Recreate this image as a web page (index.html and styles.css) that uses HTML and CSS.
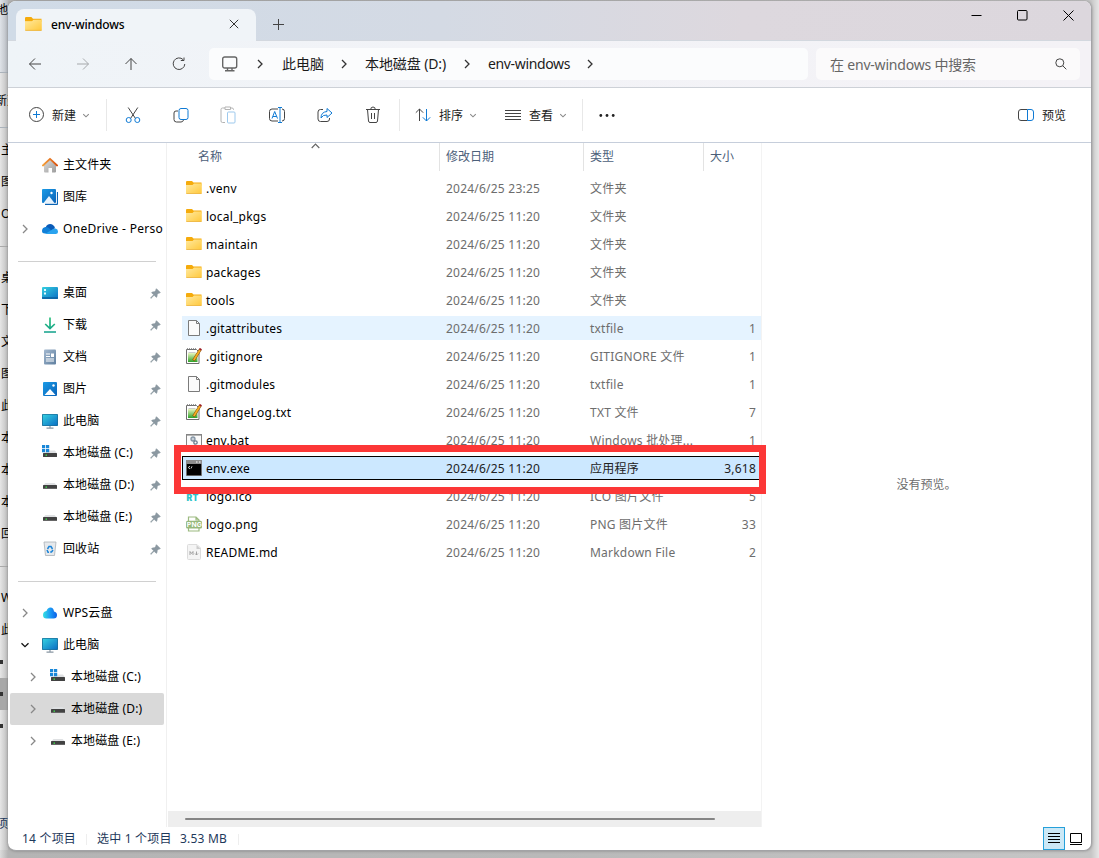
FILE: index.html
```
<!DOCTYPE html>
<html lang="zh-CN">
<head>
    <meta charset="UTF-8">
    <meta name="viewport" content="width=device-width, initial-scale=1.0">
    <title>env-windows</title>
    <link rel="stylesheet" href="styles.css">
</head>
<body>
    <!-- Icon definitions -->
    <svg class="defs" width="0" height="0">
        <defs>
            <linearGradient id="gFolder" x1="0" y1="0" x2="1" y2="1"><stop offset="0" stop-color="#ffe9a0"/><stop offset="1" stop-color="#ffc83a"/></linearGradient>
            <linearGradient id="gScreen" x1="0" y1="0" x2="1" y2="1"><stop offset="0" stop-color="#35d0e0"/><stop offset="1" stop-color="#0b6fc4"/></linearGradient>
            <linearGradient id="gBlue" x1="0" y1="0" x2="1" y2="1"><stop offset="0" stop-color="#1a9be6"/><stop offset="1" stop-color="#0a62b8"/></linearGradient>
            <linearGradient id="gDown" x1="0" y1="0" x2="0" y2="16" gradientUnits="userSpaceOnUse"><stop offset="0" stop-color="#2fc27e"/><stop offset="1" stop-color="#0f9f8c"/></linearGradient>
            <linearGradient id="gDoc" x1="0" y1="0" x2="1" y2="1"><stop offset="0" stop-color="#a3b8cf"/><stop offset="1" stop-color="#5f7f9f"/></linearGradient>
            <linearGradient id="gHouse" x1="0" y1="0" x2="1" y2="1"><stop offset="0" stop-color="#dedede"/><stop offset="1" stop-color="#9c9c9c"/></linearGradient>
            <linearGradient id="gRoof" x1="0" y1="0" x2="1" y2="0"><stop offset="0" stop-color="#f5a13c"/><stop offset="1" stop-color="#d9520f"/></linearGradient>
            <linearGradient id="gWps" x1="0" y1="0" x2="1" y2="0"><stop offset="0" stop-color="#35e0e0"/><stop offset=".5" stop-color="#1c9cf5"/><stop offset="1" stop-color="#0b5fe8"/></linearGradient>
            <linearGradient id="gNote" x1="0" y1="0" x2="0" y2="1"><stop offset="0" stop-color="#e9f7c0"/><stop offset="1" stop-color="#2fa12a"/></linearGradient>
        </defs>
        <symbol id="folder" viewBox="0 0 16 16">
            <path d="M0 2Q0 1 1 1h5l1.500 1.500H15.500v3H0z" fill="#f5ab0c"/>
            <path d="M0 5h6.500L8 3.500h7.800V13q0 .8-.8.8H.8Q0 13.800 0 13z" fill="url(#gFolder)"/>
            <path d="M.3 13.500h15.300" stroke="#e9ae34" stroke-width=".7"/>
        </symbol>
        <symbol id="home" viewBox="0 0 16 16">
            <path d="M2 8 8 2.500 14 8v6.500q0 1-1 1h-3V11H6.500v4.500H3q-1 0-1-1z" fill="url(#gHouse)"/>
            <path d="M.9 8.500 8 1.800l7.100 6.700" fill="none" stroke="url(#gRoof)" stroke-width="1.800" stroke-linejoin="round" stroke-linecap="round"/>
        </symbol>
        <symbol id="gallery" viewBox="0 0 16 16">
            <path d="M3 15.300h12q.5 0 .5-.5V3" fill="none" stroke="#0c64b4" stroke-width="1.200"/>
            <rect width="14" height="14" rx="1" fill="url(#gBlue)"/>
            <path d="M1.500 14 7 7l5.500 7z" fill="#e8f3fc"/>
            <circle cx="9.500" cy="4" r="1.200" fill="#fff"/>
        </symbol>
        <symbol id="onedrive" viewBox="0 0 16 16">
            <path d="M3 9.500Q3.500 3 8 3q3.500 0 5 4l-4 4z" fill="#0a5bb8"/>
            <path d="M0 10q0-3.500 3.500-4Q6 5.800 8 8l3 4.500H3Q0 12.500 0 10z" fill="#1180d8"/>
            <path d="M3 12.900 9.500 9q1.500-2 4-1.500Q16 8 16 10.500q0 2.500-2.500 2.500z" fill="#2aa3ef"/>
        </symbol>
        <symbol id="desktop" viewBox="0 0 16 16">
            <rect y="2" width="16" height="12" rx="1" fill="url(#gScreen)"/>
            <path d="M2 4h2v2H2zM2 7.500h2v2H2z" fill="#e4fbff"/>
            <path d="M0 13h16" stroke="#0b5f9e" stroke-width="1.500"/>
        </symbol>
        <symbol id="download" viewBox="0 0 16 16">
            <path d="M8 .5v11M3.200 7 8 11.500 12.800 7M2 15h12" fill="none" stroke="url(#gDown)" stroke-width="1.700"/>
        </symbol>
        <symbol id="docs" viewBox="0 0 16 16">
            <rect x="2" y=".5" width="12" height="15" rx="1" fill="url(#gDoc)"/>
            <path d="M4 5h4M4 7.500h4M4 10h8M4 12h8" fill="none" stroke="#fff"/>
            <path d="M9 4.500h3V8H9z" fill="#fff"/>
        </symbol>
        <symbol id="pics" viewBox="0 0 16 16">
            <rect x="1" y="1" width="14" height="14" rx="1" fill="url(#gBlue)"/>
            <path d="M2.500 14 8 8l5.500 6z" fill="#fff"/>
            <circle cx="11.500" cy="4.500" r="1.200" fill="#fff"/>
        </symbol>
        <symbol id="pc" viewBox="0 0 16 16">
            <path d="M8 13v2M4.500 15.200h7" stroke="#8997a3" stroke-width="1.200"/>
            <rect y="1" width="16" height="12" rx=".8" fill="#1b6f99"/>
            <rect x=".8" y="1.700" width="14.400" height="10.600" fill="url(#gScreen)"/>
        </symbol>
        <symbol id="disk" viewBox="0 0 16 16">
            <path d="M3.500 6h9L15 8.500H1z" fill="#dfe1e3"/>
            <rect x="1" y="8" width="14" height="4" rx=".5" fill="#424242"/>
            <rect x="1" y="11" width="14" height="1" fill="#666"/>
            <rect x="3.500" y="9.500" width="1.500" height="1.300" fill="#3fe04c"/>
        </symbol>
        <symbol id="sysdisk" viewBox="0 0 16 16">
            <path d="M7 5.500h6L15 8.500H1z" fill="#dfe1e3"/>
            <path d="M0 0h3.200v3.200H0zM4 0h3.200v3.200H4zM0 4h3.200v3.200H0zM4 4h3.200v3.200H4z" fill="#1987d8"/>
            <rect x="1" y="8" width="14" height="4" rx=".5" fill="#424242"/>
            <rect x="3.500" y="9.500" width="1.500" height="1.300" fill="#3fe04c"/>
        </symbol>
        <symbol id="bin" viewBox="0 0 16 16">
            <path d="M2 1h12l-1.500 13.500h-9z" fill="#e6e9ec" stroke="#a9b0b6" stroke-width=".8"/>
            <path d="M5.500 8 7 5.500h2L10.500 8M11 9l-1.500 2H8.200M7 11.200H6L5 9" fill="none" stroke="#1c84d8" stroke-width="1.500"/>
        </symbol>
        <symbol id="wps" viewBox="0 0 16 16">
            <path d="M1 10q0-3.500 3.500-4Q5.500 2.500 8.500 2.500T12 6.500q3 .5 3 3.500 0 3.500-3.500 3.500h-7Q1 13.500 1 10z" fill="url(#gWps)"/>
        </symbol>
        <symbol id="pin" viewBox="0 0 12 12">
            <path d="M7 .8 11.200 5l-1 .5-.7-.1L7.800 7.200 7.600 9.500l-.8.7-2.300-2.300L1 11.300l-.4-.4L4 7.400 1.800 5.200l.7-.8 2.300-.2L6.600 2.500l-.1-.8z" fill="#8b98a1" stroke="#8b98a1" stroke-width=".8"/>
        </symbol>
        <symbol id="blank" viewBox="0 0 16 16">
            <path d="M2.500.5h8L13.500 3.500v12h-11z" fill="#fbfbfb" stroke="#7b7b7b"/>
            <path d="M10.500.5v3h3" fill="none" stroke="#7b7b7b"/>
        </symbol>
        <symbol id="notepad" viewBox="0 0 16 16">
            <path d="M.5 1.500h10L13 4v11.500H.5z" fill="#fff" stroke="#6d6d6d"/>
            <path d="M1 1h9" stroke="#777" stroke-width="1.500" stroke-dasharray="1 1"/>
            <rect x="2" y="5" width="9.500" height="9" fill="url(#gNote)"/>
            <path d="M2.500 4.500h7" stroke="#b5b5b5" stroke-width=".7"/>
            <path d="M14.300 1.500 7.500 12.500" stroke="#7d4c0a" stroke-width="2.800"/>
            <path d="M14.300 1.500 7.800 12" stroke="#f5ac22" stroke-width="1.900"/>
            <path d="M14 2l.9-1.500" stroke="#9d1d24" stroke-width="2.500"/>
        </symbol>
        <symbol id="bat" viewBox="0 0 16 16">
            <rect x=".5" y="2.500" width="15" height="13" fill="#fbfbfb" stroke="#858585"/>
            <path d="M1 3.500h14" stroke="#b5b5b5"/>
            <circle cx="7" cy="7" r="2" fill="#c5ced6" stroke="#8595a5" stroke-width="1.300"/>
            <circle cx="9.500" cy="10.500" r="1.700" fill="none" stroke="#6c7c8e" stroke-width="1.300"/>
        </symbol>
        <symbol id="exe" viewBox="0 0 16 16">
            <rect width="16" height="16" fill="#8c8c8c"/>
            <rect x=".8" y="4" width="14.400" height="11.300" fill="#000"/>
            <path d="M10 2h1.500M13 2h1.500" stroke="#fff"/>
            <path d="M4 6.200 2.200 7.500 4 8.800M5 8.500 6 6.300" fill="none" stroke="#ddd" stroke-width=".9"/>
        </symbol>
        <symbol id="ico" viewBox="0 0 16 16">
            <text x=".5" y="13" font-family="Inter, sans-serif" font-size="8.500" font-weight="900" fill="#2cc3c8">RT</text>
        </symbol>
        <symbol id="png" viewBox="0 0 16 16">
            <path d="M2.500 5V1h7.500l3 3v1M2.500 12v3h10.500v-3M10 1v3h3" fill="none" stroke="#9cba80" stroke-width="1.200"/>
            <rect y="4.800" width="16" height="7.700" rx="1.500" fill="#97b97a"/>
            <text x=".8" y="11.300" font-family="Inter, sans-serif" font-size="6.800" font-weight="700" fill="#fff">PNG</text>
        </symbol>
        <symbol id="md" viewBox="0 0 16 16">
            <path d="M2.500.5H11l3.500 3.500v10.500q0 1-1 1h-11q-1 0-1-1v-13q0-1 1-1z" fill="#f4f4f4" stroke="#dcdcdc"/>
            <path d="M10.500 1v4h4z" fill="#ccc"/>
            <path d="M4 11V7.500l1.500 2 1.500-2V11M10.500 7.500V11M9 9.500l1.500 1.500L12 9.500" fill="none" stroke="#9a9a9a" stroke-width=".9"/>
        </symbol>
        <symbol id="chev" viewBox="0 0 8 10">
            <path d="M2 1 6 5 2 9" fill="none" stroke="currentColor" stroke-width="1.300"/>
        </symbol>
        <symbol id="chevDown" viewBox="0 0 10 8">
            <path d="M1.500 2.200 5 5.700 8.500 2.200" fill="none" stroke="currentColor" stroke-width="1.300"/>
        </symbol>
    </svg>

    <div class="desktop">
        <!-- Window behind -->
        <div class="behind">
            <div class="behind-tab">地</div>
            <div class="behind-bar">新建</div>
            <ul>
                <li>主</li><li>图</li><li>O</li><li class="rule"></li>
                <li>桌</li><li>下</li><li>文</li><li>图</li><li>此</li><li>本</li><li>本</li><li>本</li><li>回</li>
                <li class="rule"></li>
                <li>W</li><li>此</li><li class="disk"></li><li class="disk active"></li><li class="disk"></li>
            </ul>
            <div class="behind-status">项</div>
        </div>

        <div class="window">
            <header class="titlebar">
                <div class="tab">
                    <svg width="17" height="17"><use href="#folder"/></svg>
                    <span>env-windows</span>
                    <svg class="tab-close" width="10" height="10" viewBox="0 0 10 10"><path d="M.8.8l8.400 8.400M9.200.8.8 9.200" stroke="#333"/></svg>
                </div>
                <svg class="tab-new" width="11" height="11" viewBox="0 0 11 11"><path d="M5.500 0v11M0 5.500h11" stroke="#444"/></svg>
                <div class="controls">
                    <svg width="11" height="11" viewBox="0 0 11 11"><path d="M.5 5.500h10" stroke="#000"/></svg>
                    <svg width="11" height="11" viewBox="0 0 11 11"><rect x=".5" y=".5" width="9.500" height="9.500" rx="1" fill="none" stroke="#000"/></svg>
                    <svg width="11" height="11" viewBox="0 0 11 11"><path d="M.5.5l10 10M10.500.5l-10 10" stroke="#000"/></svg>
                </div>
            </header>

            <nav class="navbar">
                <div class="nav-buttons">
                    <svg width="14" height="14" viewBox="0 0 14 14"><path d="M13 7H1.500M7 1.500 1.500 7 7 12.500"/></svg>
                    <svg class="off" width="14" height="14" viewBox="0 0 14 14"><path d="M1 7h11.500M7 1.500 12.500 7 7 12.500"/></svg>
                    <svg width="14" height="14" viewBox="0 0 14 14"><path d="M7 13V1.500M1.500 7 7 1.500 12.500 7"/></svg>
                    <svg width="14" height="14" viewBox="0 0 14 14"><path d="M11.200 2.700A5.800 5.800 0 1 0 12.800 7M12 .5v3H8.800"/></svg>
                </div>
                <div class="address">
                    <svg class="monitor" width="17" height="16" viewBox="0 0 17 16"><rect x="1.700" y="1" width="14" height="11" rx="2"/><path d="M6.500 12v2.500M11 12v2.500M4 14.700h9.500"/></svg>
                    <svg class="sep" width="8" height="10"><use href="#chev"/></svg>
                    <span class="crumb">此电脑</span>
                    <svg class="sep" width="8" height="10"><use href="#chev"/></svg>
                    <span class="crumb disk">本地磁盘 (D:)</span>
                    <svg class="sep" width="8" height="10"><use href="#chev"/></svg>
                    <span class="crumb last">env-windows</span>
                    <svg class="sep" width="8" height="10"><use href="#chev"/></svg>
                </div>
                <div class="search">
                    <span>在 env-windows 中搜索</span>
                    <svg width="12" height="12" viewBox="0 0 12 12"><circle cx="4.800" cy="4.800" r="4"/><path d="M7.700 7.700 11.300 11.300"/></svg>
                </div>
            </nav>

            <div class="toolbar">
                <button class="new">
                    <svg width="16" height="16" viewBox="0 0 16 16"><circle cx="8.500" cy="7.500" r="7"/><path class="b" d="M8.500 4v7M5 7.500h7"/></svg>
                    新建
                    <svg class="drop" width="8" height="7"><use href="#chevDown"/></svg>
                </button>
                <div class="actions">
                    <svg width="16" height="17" viewBox="0 0 16 17"><path d="M3.200.5 10.500 11.500M12.800.5 5.500 11.500"/><circle class="b" cx="3.700" cy="13" r="2.500"/><circle class="b" cx="12.300" cy="13" r="2.500"/></svg>
                    <svg width="16" height="16" viewBox="0 0 16 16"><path d="M5 4H3Q1 4 1 6v6.500Q1 15 3.500 15H8q2 0 2.500-2"/><rect class="b" x="6" y="1.500" width="9" height="11" rx="2"/></svg>
                    <svg class="off" width="16" height="18" viewBox="0 0 16 18"><path d="M5 2H2.500Q1 2 1 3.500V15q0 1.500 1.500 1.500H5M10.500 2H12q1.500 0 1.500 1.500V4M5 1h5.500v2.500H5z"/><rect class="b" x="7.500" y="6" width="7.500" height="11" rx="1"/></svg>
                    <svg width="18" height="18" viewBox="0 0 18 18"><path d="M10 3H4Q1.500 3 1.500 5.500v7Q1.500 15 4 15h6M14 3q2.500 0 2.500 2.500v7Q16.500 15 14 15"/><path class="b" d="M12 1.500v15M10 1.500h4M10 16.500h4M4 12.500 6.700 5.500 9.500 12.500M5 10.500h3.700"/></svg>
                    <svg width="16" height="16" viewBox="0 0 16 16"><path d="M6 2.500H3.500Q1 2.500 1 5v7q0 2.500 2.500 2.500H10q2.500 0 2.500-2.500v-1"/><path class="b" d="M10 1.500 15 6l-5 4.500V8Q6 7.500 4 11q0-6 6-6.500z"/></svg>
                    <svg width="16" height="18" viewBox="0 0 16 18"><path d="M1 3.500h14M5.700 3.500Q5.700 1 8 1t2.300 2.500M2.500 3.500l1 11.500Q3.700 16.500 5 16.500h6q1.300 0 1.500-1.500l1-11.500M6.500 7v6M9.500 7v6"/></svg>
                </div>
                <div class="group">
                    <button>
                        <svg width="16" height="14" viewBox="0 0 16 14"><path d="M4.500 13V1M.8 4.700 4.500 1l3.700 3.700"/><path class="b" d="M11.500 1v12M7.800 9.300l3.700 3.700 3.700-3.700"/></svg>
                        排序
                        <svg class="drop" width="8" height="7"><use href="#chevDown"/></svg>
                    </button>
                    <button class="view">
                        <svg width="16" height="12" viewBox="0 0 16 12"><path d="M0 1.500h16M0 4.500h16M0 7.500h16M0 10.500h16"/></svg>
                        查看
                        <svg class="drop" width="8" height="7"><use href="#chevDown"/></svg>
                    </button>
                </div>
                <svg class="more" width="16" height="4" viewBox="0 0 16 4"><circle cx="1.800" cy="2.500" r="1.400"/><circle cx="8" cy="2.500" r="1.400"/><circle cx="14.200" cy="2.500" r="1.400"/></svg>
                <button class="preview-toggle">
                    <svg width="16" height="12" viewBox="0 0 16 12"><path d="M9.500.5H3Q.5.5.5 3v6q0 2.500 2.500 2.500h6.500"/><path class="b" d="M9.500.5H13q2.500 0 2.500 2.500v6q0 2.500-2.500 2.500H9.500z"/></svg>
                    预览
                </button>
            </div>

            <main class="content">
                <aside class="sidebar">
                    <div class="item"><i></i><svg width="16" height="16"><use href="#home"/></svg><span>主文件夹</span></div>
                    <div class="item"><i></i><svg width="16" height="16"><use href="#gallery"/></svg><span>图库</span></div>
                    <div class="item"><i><svg width="8" height="10"><use href="#chev"/></svg></i><svg width="16" height="16"><use href="#onedrive"/></svg><span class="wide">OneDrive - Perso</span></div>
                    <hr>
                    <div class="item"><i></i><svg width="16" height="16"><use href="#desktop"/></svg><span>桌面</span><svg class="pin" width="11" height="11"><use href="#pin"/></svg></div>
                    <div class="item"><i></i><svg width="16" height="16"><use href="#download"/></svg><span>下载</span><svg class="pin" width="11" height="11"><use href="#pin"/></svg></div>
                    <div class="item"><i></i><svg width="16" height="16"><use href="#docs"/></svg><span>文档</span><svg class="pin" width="11" height="11"><use href="#pin"/></svg></div>
                    <div class="item"><i></i><svg width="16" height="16"><use href="#pics"/></svg><span>图片</span><svg class="pin" width="11" height="11"><use href="#pin"/></svg></div>
                    <div class="item"><i></i><svg width="16" height="16"><use href="#pc"/></svg><span>此电脑</span><svg class="pin" width="11" height="11"><use href="#pin"/></svg></div>
                    <div class="item"><i></i><svg width="16" height="16"><use href="#sysdisk"/></svg><span>本地磁盘 (C:)</span><svg class="pin" width="11" height="11"><use href="#pin"/></svg></div>
                    <div class="item"><i></i><svg width="16" height="16"><use href="#disk"/></svg><span>本地磁盘 (D:)</span><svg class="pin" width="11" height="11"><use href="#pin"/></svg></div>
                    <div class="item"><i></i><svg width="16" height="16"><use href="#disk"/></svg><span>本地磁盘 (E:)</span><svg class="pin" width="11" height="11"><use href="#pin"/></svg></div>
                    <div class="item"><i></i><svg width="16" height="16"><use href="#bin"/></svg><span>回收站</span><svg class="pin" width="11" height="11"><use href="#pin"/></svg></div>
                    <hr>
                    <div class="item"><i><svg width="8" height="10"><use href="#chev"/></svg></i><svg width="16" height="16"><use href="#wps"/></svg><span>WPS云盘</span></div>
                    <div class="item open"><i><svg width="10" height="8"><use href="#chevDown"/></svg></i><svg width="16" height="16"><use href="#pc"/></svg><span>此电脑</span></div>
                    <div class="item child"><i><svg width="8" height="10"><use href="#chev"/></svg></i><svg width="16" height="16"><use href="#sysdisk"/></svg><span>本地磁盘 (C:)</span></div>
                    <div class="item child active"><i><svg width="8" height="10"><use href="#chev"/></svg></i><svg width="16" height="16"><use href="#disk"/></svg><span>本地磁盘 (D:)</span></div>
                    <div class="item child"><i><svg width="8" height="10"><use href="#chev"/></svg></i><svg width="16" height="16"><use href="#disk"/></svg><span>本地磁盘 (E:)</span></div>
                </aside>

                <section class="files">
                    <div class="head">
                        <div>名称<svg class="sort" width="9" height="6" viewBox="0 0 9 6"><path d="M.7 5 4.500 1.200 8.300 5" fill="none" stroke="#666" stroke-width="1.200"/></svg></div>
                        <div>修改日期</div>
                        <div>类型</div>
                        <div>大小</div>
                    </div>
                    <div class="rows">
                        <div class="row"><svg width="16" height="16"><use href="#folder"/></svg><b>.venv</b><span>2024/6/25 23:25</span><span>文件夹</span><em></em></div>
                        <div class="row"><svg width="16" height="16"><use href="#folder"/></svg><b>local_pkgs</b><span>2024/6/25 11:20</span><span>文件夹</span><em></em></div>
                        <div class="row"><svg width="16" height="16"><use href="#folder"/></svg><b>maintain</b><span>2024/6/25 11:20</span><span>文件夹</span><em></em></div>
                        <div class="row"><svg width="16" height="16"><use href="#folder"/></svg><b>packages</b><span>2024/6/25 11:20</span><span>文件夹</span><em></em></div>
                        <div class="row"><svg width="16" height="16"><use href="#folder"/></svg><b>tools</b><span>2024/6/25 11:20</span><span>文件夹</span><em></em></div>
                        <div class="row hover"><svg width="16" height="16"><use href="#blank"/></svg><b>.gitattributes</b><span>2024/6/25 11:20</span><span>txtfile</span><em>1</em></div>
                        <div class="row"><svg width="16" height="16"><use href="#notepad"/></svg><b>.gitignore</b><span>2024/6/25 11:20</span><span>GITIGNORE 文件</span><em>1</em></div>
                        <div class="row"><svg width="16" height="16"><use href="#blank"/></svg><b>.gitmodules</b><span>2024/6/25 11:20</span><span>txtfile</span><em>1</em></div>
                        <div class="row"><svg width="16" height="16"><use href="#notepad"/></svg><b>ChangeLog.txt</b><span>2024/6/25 11:20</span><span>TXT 文件</span><em>7</em></div>
                        <div class="row"><svg width="16" height="16"><use href="#bat"/></svg><b>env.bat</b><span>2024/6/25 11:20</span><span>Windows 批处理...</span><em>1</em></div>
                        <div class="row selected"><svg width="16" height="16"><use href="#exe"/></svg><b>env.exe</b><span>2024/6/25 11:20</span><span>应用程序</span><em>3,618</em><div class="marker"></div></div>
                        <div class="row"><svg width="16" height="16"><use href="#ico"/></svg><b>logo.ico</b><span>2024/6/25 11:20</span><span>ICO 图片文件</span><em>5</em></div>
                        <div class="row"><svg width="16" height="16"><use href="#png"/></svg><b>logo.png</b><span>2024/6/25 11:20</span><span>PNG 图片文件</span><em>33</em></div>
                        <div class="row"><svg width="16" height="16"><use href="#md"/></svg><b>README.md</b><span>2024/6/25 11:20</span><span>Markdown File</span><em>2</em></div>
                    </div>
                    <div class="scrollbar"><div class="thumb"></div></div>
                </section>

                <section class="preview">没有预览。</section>
            </main>

            <footer class="status">
                <span class="count">14 个项目</span>
                <span class="chosen">选中 1 个项目</span>
                <span class="size">3.53 MB</span>
                <div class="views">
                    <div class="view-btn on"><svg width="12" height="11" viewBox="0 0 12 11"><path d="M0 .5h12M0 3.500h12M0 6.500h12M0 9.500h12" stroke="#000"/></svg></div>
                    <div class="view-btn"><svg width="12" height="12" viewBox="0 0 12 12"><path d="M.5.5h11v9H.5zM0 11.500h12" fill="none" stroke="#000"/></svg></div>
                </div>
            </footer>
        </div>
    </div>
</body>
</html>
```
FILE: styles.css
```
* {
    margin: 0;
    padding: 0;
    box-sizing: border-box;
}

body {
    font-family: "Noto Sans", "Noto Sans CJK SC", sans-serif;
    font-size: 12px;
    color: #000;
    overflow: hidden;
}

svg {
    display: block;
    flex: none;
}

.defs {
    position: absolute;
}

.desktop {
    position: relative;
    width: 1099px;
    height: 858px;
    padding: 1px 7px 7px 8px;
    background: linear-gradient(90deg, #dcdcdc 0, #b4b4b4 8px, #b9b9b9 50%, #c6c6c6 1091px, #e6e6e6 100%);
}

/* Window behind */
.behind {
    position: absolute;
    top: 0;
    left: 0;
    width: 8px;
    height: 850px;
    overflow: hidden;
    background: linear-gradient(90deg, #e6e6e6, #bdbdbd);
    white-space: nowrap;
}

.behind-tab {
    height: 73px;
    padding-top: 2px;
    line-height: 16px;
    text-indent: -4px;
    border-bottom: 1px solid #aab2ba;
    background: linear-gradient(90deg, #dfe3e8, #b6bac0);
}

.behind-bar {
    height: 55px;
    line-height: 56px;
    text-indent: -5px;
    border-bottom: 1px solid #aab2ba;
}

.behind ul {
    list-style: none;
    margin-top: 6px;
}

.behind li {
    height: 32px;
    line-height: 31px;
    padding-left: 1px;
}

.behind .rule {
    background: linear-gradient(#aaa, #aaa) 0 16px / 100% 1px no-repeat;
}

.behind .disk {
    background: linear-gradient(#333, #333) 0 14px / 3px 4px no-repeat;
}

.behind .active {
    background-color: #a8a8a8;
}

.behind-status {
    margin-top: 72px;
    text-indent: -4px;
    color: #1e395b;
}

.window {
    position: relative;
    display: flex;
    flex-direction: column;
    width: 1084px;
    height: 850px;
    border-radius: 8px;
    border: 1px solid #a3a3a6;
    border-left: 0;
    border-top: 0;
    background: #fff;
    overflow: hidden;
    box-shadow: 0 0 3px rgba(0, 0, 0, 0.3);
}

/* Title bar */
.titlebar {
    display: flex;
    height: 40px;
    flex: none;
    padding-left: 8px;
    background: linear-gradient(90deg, #d0dbe7 0, #d4dae4 40%, #ddd8de 68%, #dcd7dd 100%);
    border-bottom: 1px solid #d3d8df;
}

.tab {
    display: flex;
    align-items: center;
    width: 240px;
    height: 32px;
    margin-top: 8px;
    padding: 0 17px 2px 9px;
    background: #f0f4f8;
    border-radius: 8px 8px 0 0;
    font-weight: 500;
    letter-spacing: -0.15px;
}

.tab span {
    margin-left: 9px;
}

.tab-close {
    margin-left: auto;
}

.tab-new {
    margin: 18px 0 0 17px;
}

.controls {
    display: flex;
    gap: 35px;
    margin: 9px 17px 0 auto;
}

/* Navigation */
.navbar {
    display: flex;
    align-items: center;
    height: 47px;
    flex: none;
    padding: 0 11px 0 20px;
    background: linear-gradient(90deg, #eff4f8 0, #f2f3f7 40%, #f4f2f6 100%);
    border-bottom: 1px solid #cdd1d7;
    font-size: 14px;
    color: #1b1b1b;
}

.nav-buttons {
    display: flex;
    gap: 34px;
    width: 181px;
}

.navbar svg,
.toolbar svg {
    fill: none;
    stroke: #444;
}

.nav-buttons .off {
    stroke: #a5a8ab;
}

.address {
    display: flex;
    align-items: center;
    width: 599px;
    height: 32px;
    padding-left: 12px;
    border-radius: 5px;
    background: #fbfcfd;
}

.address .monitor {
    stroke: #666;
    stroke-width: 1.4;
    margin-right: 14px;
}

.address .sep {
    margin: 0 4px;
    color: #333;
}

.crumb {
    width: 42px;
    margin: 0 12px 0 14px;
    line-height: 20px;
    white-space: nowrap;
}

.crumb.disk {
    width: 82px;
    letter-spacing: -0.1px;
    margin-left: 13px;
    margin-right: 12px;
}

.crumb.last {
    width: 82px;
    margin-left: 13px;
    letter-spacing: -0.35px;
}

.search {
    display: flex;
    align-items: center;
    justify-content: space-between;
    width: 264px;
    height: 32px;
    margin-left: 8px;
    padding: 0 13px 0 14px;
    border-radius: 5px;
    background: #fbfafb;
    color: #666;
    letter-spacing: -0.2px;
}

.search span {
    margin-top: -1px;
}

/* Toolbar */
.toolbar {
    display: flex;
    align-items: center;
    height: 55px;
    flex: none;
    padding: 0 25px 0 20px;
    border-bottom: 1px solid #c6cedb;
    color: #1b1b1b;
}

.toolbar button {
    display: flex;
    align-items: center;
    font: inherit;
    color: inherit;
    background: none;
    border: 0;
    gap: 8px;
}

.toolbar .b {
    stroke: #0f7ad4;
}

.toolbar .off {
    opacity: 0.4;
}

.toolbar .drop {
    color: #888;
    margin-left: -2px;
}

.toolbar .new {
    width: 79px;
    height: 32px;
    border-right: 1px solid #e8e8e8;
}

.actions {
    display: flex;
    align-items: center;
    justify-content: space-between;
    width: 293px;
    height: 32px;
    padding: 0 18px;
    border-right: 1px solid #e8e8e8;
}

.group {
    display: flex;
    gap: 28px;
    width: 183px;
    height: 32px;
    padding-left: 15px;
    border-right: 1px solid #e8e8e8;
}

.toolbar .more {
    margin-left: 16px;
    fill: #222;
    stroke: none;
}

.preview-toggle {
    margin-left: auto;
}

/* Main content */
.content {
    display: flex;
    height: 684px;
    flex: none;
}

.sidebar {
    width: 159px;
    padding: 6px 2px 0 2px;
    border-right: 1px solid #f0f0f0;
}

.item {
    display: flex;
    align-items: center;
    height: 32px;
    padding-left: 10px;
    border-radius: 2px;
    letter-spacing: 0.1px;
}

.item i {
    width: 22px;
    padding-left: 1px;
    color: #888;
}

.item span {
    margin: -2px 0 0 5px;
    white-space: nowrap;
}

.item .wide {
    letter-spacing: 0.3px;
}

.item .pin {
    margin: 0 3px 0 auto;
}

.item.child {
    padding-left: 18px;
}

.item.open i {
    padding-left: 0;
    color: #111;
}

.item.active {
    background: #d9d9d9;
}

.sidebar hr {
    height: 1px;
    margin: 16px 8px 15px;
    border: 0;
    background: #d0d0d0;
}

.files {
    display: flex;
    flex-direction: column;
    width: 595px;
    padding-left: 1px;
    border-right: 1px solid #f3f3f3;
}

.head {
    display: grid;
    grid-template-columns: 272px 144px 120px 57px;
    height: 27px;
    line-height: 28px;
    color: #4c607a;
}

.head div {
    position: relative;
    padding-left: 6px;
    border-right: 1px solid #e3e3e3;
}

.head div:first-child {
    padding-left: 30px;
}

.head div:last-child {
    border: 0;
}

.sort {
    position: absolute;
    top: 0;
    left: 143px;
}

.rows {
    display: flex;
    flex-direction: column;
    gap: 4px;
    padding: 6px 0 0 14px;
}

.row {
    position: relative;
    display: grid;
    grid-template-columns: 20px 240px 144px 114px 52px;
    align-items: center;
    width: 579px;
    height: 24px;
    padding-left: 4px;
    line-height: 26px;
    color: #6d6d6d;
    letter-spacing: 0.22px;
    white-space: nowrap;
}

.row b,
.row span,
.row em {
    height: 24px;
}

.row b {
    font-weight: 400;
    color: #000;
}

.row em {
    font-style: normal;
    text-align: right;
}

.row.hover {
    background: #e5f3ff;
}

.row.selected {
    background: #cce8ff;
    box-shadow: inset 0 0 0 1px #000;
    color: #222;
    z-index: 1;
}

/* Red frame round the selected file */
.marker {
    position: absolute;
    top: -11px;
    left: -8px;
    width: 592px;
    height: 49px;
    border: 7px solid #fc3737;
}

.scrollbar {
    height: 16px;
    width: 593px;
    margin-top: auto;
    padding: 7px 0 0 17px;
    background: #eee;
}

.thumb {
    width: 530px;
    height: 2px;
    border-radius: 1px;
    background: #858585;
}

.preview {
    flex: 1;
    display: flex;
    align-items: center;
    justify-content: center;
    padding-bottom: 2px;
    color: #6d6d6d;
}

/* Status bar */
.status {
    display: flex;
    flex: 1;
    padding-left: 14px;
    line-height: 24px;
    letter-spacing: 0.2px;
    color: #1e395b;
}

.count {
    width: 75px;
}

.chosen {
    width: 83px;
}

.count,
.size {
    background: linear-gradient(#eee, #eee) 64px 7px / 1px 11px no-repeat;
}

.size {
    width: 66px;
    background-position: 58px 7px;
}

.views {
    display: flex;
    margin: 0 4px 0 auto;
}

.view-btn {
    display: flex;
    align-items: center;
    justify-content: center;
    width: 22px;
    height: 23px;
}

.view-btn.on {
    border: 1px solid #26a0da;
    background: #cbe8f6;
}
```
